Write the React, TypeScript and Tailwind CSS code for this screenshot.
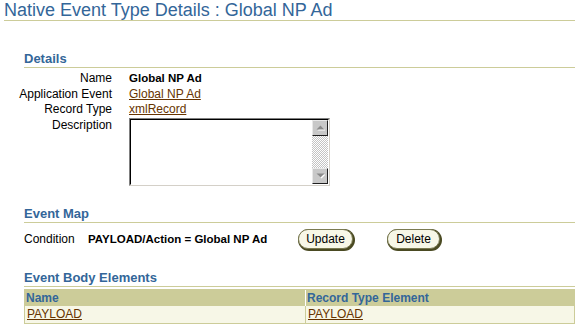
import React from "react";

function ScrollBtn({ up }: { up: boolean }) {
  return (
    <div className="h-[16px] w-[16px] border border-t-[#e8e8e8] border-l-[#e8e8e8] border-r-[#202020] border-b-[#202020] bg-[#c8c8c8] flex items-center justify-center">
      <svg width="9" height="6" viewBox="0 0 9 6">
        {up ? (
          <>
            <polygon points="1.5,5.5 5.5,1.5 9.5,5.5" fill="#ffffff" />
            <polygon points="0.5,4.5 4.5,0.5 8.5,4.5" fill="#8a8a8a" />
          </>
        ) : (
          <>
            <polygon points="1.5,1.5 9.5,1.5 5.5,5.5" fill="#ffffff" />
            <polygon points="0.5,0.5 8.5,0.5 4.5,4.5" fill="#8a8a8a" />
          </>
        )}
      </svg>
    </div>
  );
}

function Btn({ label, w }: { label: string; w: string }) {
  return (
    <div
      className={`${w} h-[20px] rounded-full border border-[#7a7a52] bg-[#f7f7e7] shadow-[1px_1px_0_1px_#4a4a22] flex items-center justify-center text-[12px] leading-[14px] text-black`}
    >
      {label}
    </div>
  );
}

export default function App() {
  return (
    <div className="w-[575px] h-[329px] overflow-hidden bg-white font-['Liberation_Sans',Arial,sans-serif] text-black">
      {/* Title */}
      <div className="ml-[4px] border-b border-[#cccc99]">
        <h1 className="text-[18px] leading-[20px] text-[#336699] font-normal whitespace-nowrap">
          Native Event Type Details : Global NP Ad
        </h1>
      </div>

      {/* Details */}
      <h2 className="ml-[24px] mt-[30px] border-b border-[#cccc99] text-[13px] leading-[16px] font-bold text-[#336699]">
        Details
      </h2>
      <div className="ml-[12px] pt-[3px] grid grid-cols-[100px_1fr] gap-x-[17px] text-[12px] leading-[15.5px]">
        <div className="text-right whitespace-nowrap">Name</div>
        <div className="font-bold text-[11.5px]">Global NP Ad</div>
        <div className="text-right whitespace-nowrap">Application Event</div>
        <div>
          <span className="text-[#663300] underline">Global NP Ad</span>
        </div>
        <div className="text-right whitespace-nowrap">Record Type</div>
        <div>
          <span className="text-[#663300] underline">xmlRecord</span>
        </div>
        <div className="text-right whitespace-nowrap">Description</div>
        <div>
          <div className="w-[201px] h-[68px] border border-t-[#808080] border-l-[#808080] border-r-[#d4d0c8] border-b-[#d4d0c8]">
            <div className="w-full h-full border border-t-[#000000] border-l-[#000000] border-r-white border-b-white flex justify-end bg-white">
              <div className="w-[16px] h-full flex flex-col">
                <ScrollBtn up={true} />
                <div className="flex-1 [background:repeating-conic-gradient(#c4c4c4_0%_25%,#ffffff_0%_50%)_0_0/2px_2px]" />
                <ScrollBtn up={false} />
              </div>
            </div>
          </div>
        </div>
      </div>

      <div className="ml-[24px]">
        {/* Event Map */}
        <h2 className="mt-[20px] border-b border-[#cccc99] text-[13px] leading-[16px] font-bold text-[#336699]">
          Event Map
        </h2>
        <div className="mt-[5px] h-[22px] grid grid-cols-[64px_210px_89px_auto] items-center text-[12px] leading-[16px]">
          <div>Condition</div>
          <div className="font-bold text-[11.5px] whitespace-nowrap">PAYLOAD/Action = Global NP Ad</div>
          <div>
            <Btn label="Update" w="w-[55px]" />
          </div>
          <div>
            <Btn label="Delete" w="w-[53px]" />
          </div>
        </div>

        {/* Event Body Elements */}
        <h2 className="mt-[20px] border-b border-[#cccc99] text-[13px] leading-[16px] font-bold text-[#336699]">
          Event Body Elements
        </h2>
        <div className="mt-[2px] border border-[#cccc99] text-[12px]">
          <div className="grid grid-cols-[281px_1fr] bg-[#cccc99] h-[16px] leading-[16px] font-bold text-[#336699]">
            <div className="pl-[1px] border-r border-white">Name</div>
            <div className="pl-[1px]">Record Type Element</div>
          </div>
          <div className="grid grid-cols-[281px_1fr] bg-[#f7f7e7] h-[17px] leading-[17px]">
            <div className="pl-[2px] border-r border-[#cccc99]">
              <span className="text-[#663300] underline">PAYLOAD</span>
            </div>
            <div className="pl-[2px]">
              <span className="text-[#663300] underline">PAYLOAD</span>
            </div>
          </div>
        </div>
      </div>
    </div>
  );
}
